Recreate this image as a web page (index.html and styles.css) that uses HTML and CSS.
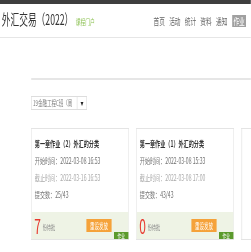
FILE: index.html
```html
<!DOCTYPE html>
<html lang="zh-CN">
<head>
<meta charset="utf-8">
<link rel="stylesheet" href="styles.css">
</head>
<body>
<div class="page">
  <div class="topbar"></div>
  <header class="head">
    <h1 class="course">外汇交易（2022）<a class="portal">课程门户</a></h1>
    <nav class="nav">
      <a>首页</a><a>活动</a><a>统计</a><a>资料</a><a>通知</a><a class="on">作业</a>
    </nav>
  </header>
  <main class="main">
    <div class="rule"></div>
    <div class="filter">
      <div class="select"><span class="sel-text">19金融工程C班（周</span><span class="sel-arrow">▼</span></div>
    </div>
    <div class="cards">
      <div class="card">
        <div class="card-body">
          <div class="card-title">第一章作业（2）外汇的分类</div>
          <div class="line">开始时间：2022-03-08 16:53</div>
          <div class="line muted">截止时间：2022-03-16 16:53</div>
          <div class="line">提交数：25/43</div>
        </div>
        <div class="card-foot">
          <span class="count">7</span><span class="pend">份待批</span>
          <span class="btn">重设发放</span>
        </div>
        <span class="tag">作业</span>
      </div>
      <div class="card">
        <div class="card-body">
          <div class="card-title">第一章作业（1）外汇的分类</div>
          <div class="line">开始时间：2022-03-08 15:33</div>
          <div class="line muted">截止时间：2022-03-08 17:00</div>
          <div class="line">提交数：43/43</div>
        </div>
        <div class="card-foot">
          <span class="count">0</span><span class="pend">份待批</span>
          <span class="btn">重设发放</span>
        </div>
        <span class="tag">作业</span>
      </div>
      <div class="card"></div>
    </div>
  </main>
</div>
</body>
</html>
```

FILE: styles.css
```css
html, body {
  margin: 0;
  padding: 0;
  background: #fff;
  overflow: hidden;
}
body {
  font-family: "Noto Sans CJK SC", "Noto Sans", sans-serif;
  color: #333;
}
.page {
  width: 418px;
  transform: scaleX(0.6);
  transform-origin: 0 0;
}
.topbar {
  height: 4px;
  background: #3e3e3e;
}
.head {
  height: 33px;
  border-bottom: 1px solid #e6e6e6;
  display: flex;
  align-items: center;
  justify-content: space-between;
  padding: 0 8px 0 3px;
}
.course {
  margin: 0;
  font-size: 14.5px;
  font-weight: normal;
  color: #333;
  line-height: 18px;
  display: flex;
  align-items: baseline;
}
.portal {
  font-size: 8px;
  color: #8cc152;
  margin-left: 4px;
}
.nav {
  display: flex;
  align-items: center;
  gap: 7px;
  font-size: 9.5px;
  color: #666;
}
.nav a {
  line-height: 12px;
}
.nav a.on {
  background: #a0a0a0;
  color: #fff;
  padding: 0 2px;
  margin-left: 1px;
}
.main {
  padding: 40px 0 0 52px;
}
.rule {
  height: 2px;
  background: #e6e6e6;
}
.filter {
  margin-top: 16px;
}
.select {
  width: 93px;
  height: 14px;
  box-sizing: border-box;
  border: 1px solid #ddd;
  display: flex;
  font-size: 7.5px;
  color: #777;
}
.sel-text {
  flex: 1;
  padding-left: 2px;
  line-height: 12px;
  white-space: nowrap;
  overflow: hidden;
}
.sel-arrow {
  width: 15px;
  border-left: 1px solid #ddd;
  font-size: 5px;
  color: #222;
  text-align: center;
  line-height: 12px;
}
.cards {
  margin-top: 18px;
  display: flex;
  gap: 12px;
}
.card {
  position: relative;
  flex: 0 0 163px;
  height: 112px;
  box-sizing: border-box;
  border-style: solid;
  border-color: #e4e4e4;
  border-width: 1px 1.7px;
  display: flex;
  flex-direction: column;
}
.card-body {
  flex: 1;
  padding: 6px 0 0 5px;
}
.card-title {
  font-size: 8.5px;
  font-weight: bold;
  line-height: 17px;
  color: #333;
}
.line {
  font-size: 8.5px;
  line-height: 17px;
  color: #707070;
}
.line.muted {
  color: #aaa;
}
.card-foot {
  height: 27px;
  background: #eef3e5;
  display: flex;
  align-items: center;
  padding-left: 4px;
  position: relative;
}
.count {
  font-size: 20px;
  color: #e8392f;
  line-height: 18px;
}
.pend {
  font-size: 7px;
  color: #888;
  margin-left: 3px;
  align-self: flex-end;
  margin-bottom: 7px;
}
.btn {
  margin-left: auto;
  margin-right: 28px;
  background: #f5a23a;
  color: #fff;
  font-size: 7.5px;
  line-height: 13px;
  padding: 0 6px;
}
.tag {
  position: absolute;
  right: 0;
  bottom: 0;
  background: #5b9a2c;
  color: #fff;
  font-size: 6px;
  line-height: 7px;
  padding: 0 6px;
  overflow: hidden;
  height: 7px;
}
```
